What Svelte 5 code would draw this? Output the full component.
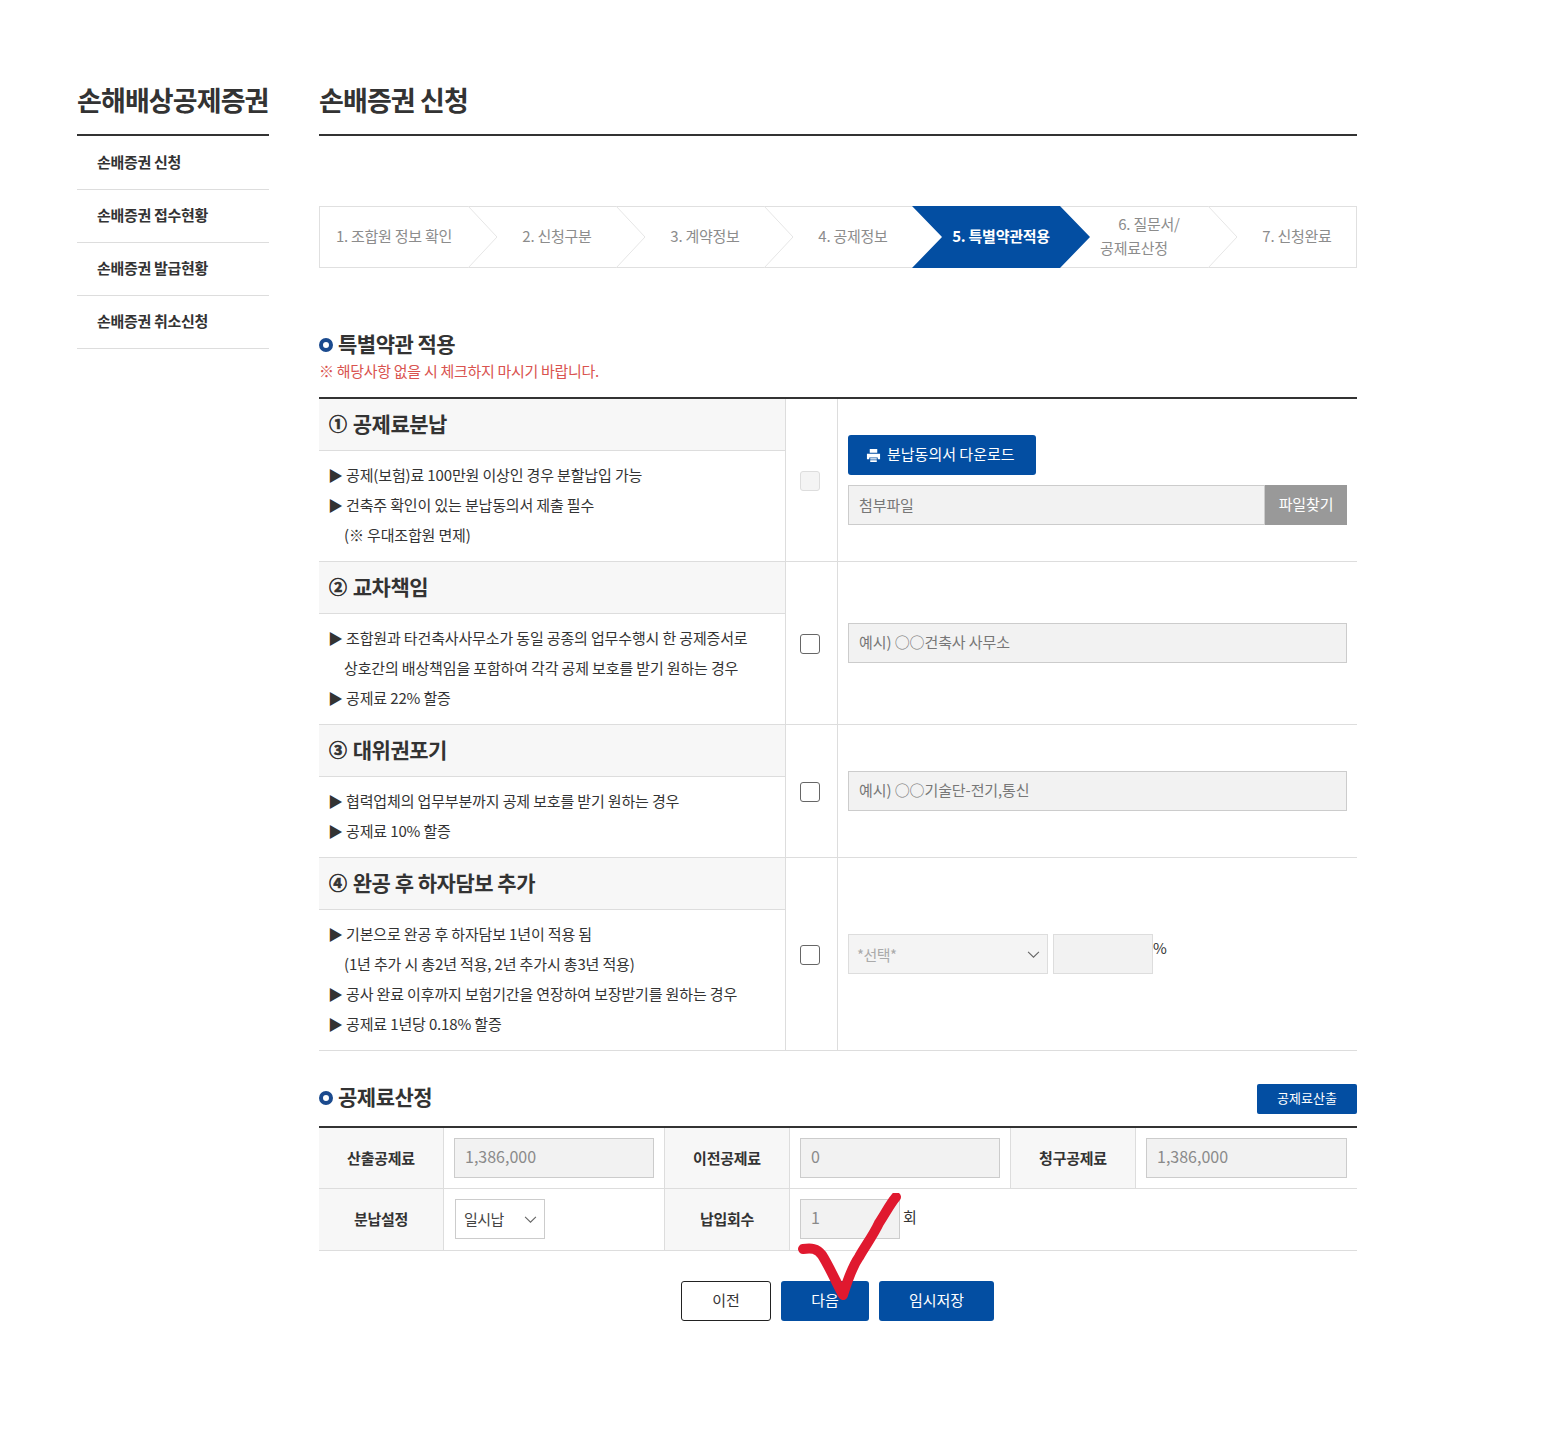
<script>
  const menu = ['손배증권 신청', '손배증권 접수현황', '손배증권 발급현황', '손배증권 취소신청']
  const steps = [
    { label: '1. 조합원 정보 확인' },
    { label: '2. 신청구분' },
    { label: '3. 계약정보' },
    { label: '4. 공제정보' },
    { label: '5. 특별약관적용', active: true },
    { label: '6. 질문서/', sub: '공제료산정' },
    { label: '7. 신청완료' }
  ]
</script>

{#snippet arrow()}
  <svg class="arrow" viewBox="0 0 12 8" aria-hidden="true"><path d="M1 1.5 6 6.5 11 1.5" fill="none" stroke="#666" stroke-width="1"/></svg>
{/snippet}

<main>
  <aside>
    <h2>손해배상공제증권</h2>
    <ul>
      {#each menu as item}
        <li>{item}</li>
      {/each}
    </ul>
  </aside>

  <section class="content">
    <h1>손배증권 신청</h1>

    <div class="steps">
      {#each steps as step, i}
        <div class="step" class:first={i === 0} class:active={step.active}>
          {#if step.active}
            <svg class="shape" viewBox="0 0 178 62" preserveAspectRatio="none" aria-hidden="true"><path d="M0 0H148L178 31 148 62H0L30 31Z" fill="#034ea2"/></svg>
          {:else if i < 6 && !steps[i + 1].active}
            <svg class="chev" viewBox="0 0 30 62" aria-hidden="true"><path d="M0 0 29 31 0 62" fill="none" stroke="#e6e6e6"/></svg>
          {/if}
          <div class="label">
            {step.label}
            {#if step.sub}<span class="sub">{step.sub}</span>{/if}
          </div>
        </div>
      {/each}
    </div>

    <h3 class="sec first-sec"><i></i>특별약관 적용</h3>
    <p class="note">※ 해당사항 없을 시 체크하지 마시기 바랍니다.</p>

    <div class="terms">
      <div class="term">
        <div class="desc">
          <h4><span>①</span> 공제료분납</h4>
          <div class="lines">
            <p>▶ 공제(보험)료 100만원 이상인 경우 분할납입 가능</p>
            <p>▶ 건축주 확인이 있는 분납동의서 제출 필수</p>
            <p class="indent">(※ 우대조합원 면제)</p>
          </div>
        </div>
        <div class="check"><input type="checkbox" disabled /></div>
        <div class="field">
          <button class="download">
            <svg viewBox="0 0 16 16" aria-hidden="true"><path fill="#fff" d="M4 1h8v4H4zM1 6h14v6h-2.500v-2h-9v2H1zM4.500 11h7v1.200h-7zM4.500 13h7v1.800h-7z"/></svg>
            분납동의서 다운로드
          </button>
          <div class="file">
            <input type="text" placeholder="첨부파일" disabled />
            <span>파일찾기</span>
          </div>
        </div>
      </div>

      <div class="term">
        <div class="desc">
          <h4><span>②</span> 교차책임</h4>
          <div class="lines">
            <p>▶ 조합원과 타건축사사무소가 동일 공종의 업무수행시 한 공제증서로</p>
            <p class="indent">상호간의 배상책임을 포함하여 각각 공제 보호를 받기 원하는 경우</p>
            <p>▶ 공제료 22% 할증</p>
          </div>
        </div>
        <div class="check"><input type="checkbox" /></div>
        <div class="field"><input type="text" placeholder="예시) ○○건축사 사무소" disabled /></div>
      </div>

      <div class="term">
        <div class="desc">
          <h4><span>③</span> 대위권포기</h4>
          <div class="lines">
            <p>▶ 협력업체의 업무부분까지 공제 보호를 받기 원하는 경우</p>
            <p>▶ 공제료 10% 할증</p>
          </div>
        </div>
        <div class="check"><input type="checkbox" /></div>
        <div class="field"><input type="text" placeholder="예시) ○○기술단-전기,통신" disabled /></div>
      </div>

      <div class="term">
        <div class="desc">
          <h4><span>④</span> 완공 후 하자담보 추가</h4>
          <div class="lines">
            <p>▶ 기본으로 완공 후 하자담보 1년이 적용 됨</p>
            <p class="indent">(1년 추가 시 총2년 적용, 2년 추가시 총3년 적용)</p>
            <p>▶ 공사 완료 이후까지 보험기간을 연장하여 보장받기를 원하는 경우</p>
            <p>▶ 공제료 1년당 0.18% 할증</p>
          </div>
        </div>
        <div class="check"><input type="checkbox" /></div>
        <div class="field inline">
          <div class="select sel-off">
            <select disabled><option>*선택*</option></select>
            {@render arrow()}
          </div>
          <input class="pct" type="text" disabled />
          <span class="unit pct-unit">%</span>
        </div>
      </div>
    </div>

    <div class="calc-head">
      <h3 class="sec"><i></i>공제료산정</h3>
      <button class="calc-btn">공제료산출</button>
    </div>

    <div class="calc">
      <div class="th">산출공제료</div>
      <div class="td"><input type="text" value="1,386,000" disabled /></div>
      <div class="th mid">이전공제료</div>
      <div class="td"><input type="text" value="0" disabled /></div>
      <div class="th mid">청구공제료</div>
      <div class="td"><input type="text" value="1,386,000" disabled /></div>

      <div class="th">분납설정</div>
      <div class="td">
        <div class="select sel-on">
          <select><option>일시납</option></select>
          {@render arrow()}
        </div>
      </div>
      <div class="th mid">납입회수</div>
      <div class="td times">
        <input type="text" value="1" disabled />
        <span class="unit">회</span>
      </div>
      <div class="td rest"></div>
    </div>

    <div class="actions">
      <button class="prev">이전</button>
      <button class="next">다음</button>
      <button class="save">임시저장</button>
    </div>
  </section>

  <svg class="mark" viewBox="0 0 120 120" aria-hidden="true">
    <path d="M6 56C14 55 20 55 25 62 32 73 39 89 46 102 50 89 55 74 62 64 68 53 76 43 82 30 88 21 93 11 99 4" fill="none" stroke="#e0192f" stroke-width="10" stroke-linecap="round" stroke-linejoin="round"/>
  </svg>
</main>

<style>
  :global(body) {
    background: #fff;
  }

  main {
    position: relative;
    box-sizing: border-box;
    display: flex;
    gap: 50px;
    width: 1357px;
    height: 1448px;
    padding: 78px 0 0 77px;
    overflow: hidden;
    font-family: 'Noto Sans CJK KR', 'Noto Sans', sans-serif;
    color: #333;
    letter-spacing: -0.15px;
  }

  aside {
    width: 192px;
    flex: none;
  }

  aside h2,
  h1 {
    margin: 0;
    height: 56px;
    line-height: 44px;
    font-size: 27px;
    font-weight: 700;
    color: #333;
    border-bottom: 2px solid #333;
    letter-spacing: -0.9px;
    white-space: nowrap;
  }

  ul {
    margin: 0;
    padding: 1px 0 0;
    list-style: none;
  }

  li {
    height: 52px;
    padding-left: 20px;
    line-height: 50px;
    font-size: 15px;
    font-weight: 700;
    letter-spacing: -0.3px;
    border-bottom: 1px solid #ddd;
  }

  .content {
    width: 1038px;
    flex: none;
  }

  .steps {
    box-sizing: border-box;
    display: grid;
    grid-template-columns: repeat(7, 1fr);
    height: 62px;
    margin-top: 70px;
    border: 1px solid #e0e0e0;
  }

  .step {
    position: relative;
    display: flex;
    align-items: center;
    justify-content: center;
    padding: 0 0 2px 30px;
    font-size: 15px;
    color: #8c8c8c;
    line-height: 24px;
    text-align: center;
    letter-spacing: -0.25px;
  }

  .step.first {
    padding-left: 0;
  }

  .step .label {
    position: relative;
    white-space: nowrap;
  }

  .sub {
    display: block;
    margin-right: 30px;
  }

  .chev {
    position: absolute;
    top: -1px;
    right: -30px;
    width: 30px;
    height: 62px;
    z-index: 1;
  }

  .shape {
    position: absolute;
    top: -1px;
    left: 0;
    width: 178px;
    height: 62px;
    z-index: 2;
  }

  .step.active .label {
    z-index: 3;
    color: #fff;
    font-weight: 700;
  }

  .sec {
    display: flex;
    align-items: center;
    gap: 5px;
    margin: 0;
    font-size: 21px;
    font-weight: 700;
    color: #333;
    line-height: 30px;
    letter-spacing: -0.5px;
  }

  .sec i {
    width: 14px;
    height: 14px;
    box-sizing: border-box;
    border: 4px solid #1b4a8e;
    border-radius: 50%;
    margin-top: 4px;
  }

  .first-sec {
    margin-top: 60px;
  }

  .note {
    margin: 1px 0 0;
    height: 24px;
    font-size: 15px;
    line-height: 24px;
    letter-spacing: -0.3px;
    color: #d9534f;
  }

  .terms {
    margin-top: 14px;
    border-top: 2px solid #333;
  }

  .term {
    display: flex;
    border-bottom: 1px solid #ddd;
  }

  .desc {
    width: 466px;
    flex: none;
  }

  h4 {
    margin: 0;
    height: 51px;
    padding-left: 10px;
    line-height: 48px;
    font-size: 21px;
    font-weight: 700;
    letter-spacing: -0.5px;
    background: #f7f7f7;
    border-bottom: 1px solid #ddd;
  }

  h4 span {
    margin-right: 2px;
    font-size: 18px;
    -webkit-text-stroke: 0.6px #333;
    vertical-align: 1px;
  }

  .lines {
    padding: 9px 0 11px 9px;
  }

  .lines p {
    margin: 0;
    font-size: 15px;
    line-height: 30px;
    white-space: nowrap;
  }

  .lines .indent {
    padding-left: 16px;
  }

  .check {
    width: 53px;
    flex: none;
    box-sizing: border-box;
    display: flex;
    align-items: center;
    justify-content: center;
    border-left: 1px solid #ddd;
    border-right: 1px solid #ddd;
  }

  input[type='checkbox'] {
    appearance: none;
    width: 20px;
    height: 20px;
    margin: 2px 4px 0 0;
    background: #fff;
    border: 1px solid #666;
    border-radius: 3px;
  }

  input[type='checkbox']:disabled {
    background: #f4f4f4;
    border-color: #ddd;
  }

  .field {
    flex: 1;
    display: flex;
    flex-direction: column;
    justify-content: center;
    gap: 10px;
    padding: 0 10px;
  }

  .field.inline {
    flex-direction: row;
    align-items: center;
    justify-content: flex-start;
    gap: 5px;
  }

  input[type='text'] {
    box-sizing: border-box;
    width: 100%;
    height: 40px;
    padding: 0 10px 4px;
    font: inherit;
    font-size: 15px;
    letter-spacing: -0.1px;
    color: #8a8a8a;
    background: #f2f2f2;
    border: 1px solid #ccc;
    border-radius: 0;
    opacity: 1;
  }

  input[type='text']::placeholder {
    color: #777;
    opacity: 1;
  }

  .download {
    display: flex;
    align-items: center;
    gap: 6px;
    width: 188px;
    height: 40px;
    padding: 0 0 3px 18px;
    font: inherit;
    font-size: 15px;
    color: #fff;
    background: #034ea2;
    border: 0;
    border-radius: 3px;
  }

  .download svg {
    width: 15px;
    height: 15px;
    margin-top: 3px;
  }

  .file {
    display: flex;
  }

  .file input[type='text'] {
    padding-bottom: 2px;
  }

  .file span {
    flex: none;
    width: 82px;
    height: 40px;
    line-height: 38px;
    text-align: center;
    font-size: 15px;
    color: #fff;
    background: #999;
  }

  .select {
    position: relative;
    flex: none;
    height: 40px;
    box-sizing: border-box;
  }

  .select select {
    appearance: none;
    width: 100%;
    height: 40px;
    padding: 0 8px;
    font: inherit;
    font-size: 15px;
    letter-spacing: -0.5px;
    background: #fff;
    border: 1px solid #ccc;
    border-radius: 0;
    color: #444;
  }

  .sel-off {
    width: 200px;
  }

  .sel-off select {
    background: #f4f4f4;
    border-color: #ddd;
    color: #aaa;
    opacity: 1;
  }

  .sel-on {
    width: 90px;
    margin: 0 0 2px 1px;
  }

  .arrow {
    position: absolute;
    top: 16px;
    right: 8px;
    width: 13px;
    height: 9px;
    pointer-events: none;
  }

  input.pct[type='text'] {
    width: 100px;
    border-color: #ddd;
  }

  .unit {
    font-size: 15px;
    line-height: 20px;
  }

  .pct-unit {
    margin: -12px 0 0 -5px;
  }

  .calc-head {
    display: flex;
    align-items: flex-start;
    justify-content: space-between;
    height: 30px;
    margin-top: 33px;
  }

  .calc-head .sec {
    margin-top: -3px;
  }

  .calc-btn {
    width: 100px;
    height: 30px;
    padding: 0 0 3px;
    font: inherit;
    font-size: 13px;
    color: #fff;
    background: #034ea2;
    border: 0;
    border-radius: 2px;
  }

  .calc {
    display: grid;
    grid-template-columns: 125px 220px 126px 220px 126px 221px;
    grid-template-rows: 61px 62px;
    margin-top: 12px;
    border-top: 2px solid #333;
  }

  .th {
    display: flex;
    align-items: center;
    justify-content: center;
    padding-bottom: 2px;
    box-sizing: border-box;
    font-size: 15px;
    font-weight: 700;
    letter-spacing: -0.25px;
    background: #f7f7f7;
    border-bottom: 1px solid #ddd;
    border-right: 1px solid #ddd;
  }

  .th.mid {
    border-left: 1px solid #ddd;
  }

  .td {
    display: flex;
    align-items: center;
    padding: 0 10px;
    box-sizing: border-box;
    border-bottom: 1px solid #ddd;
  }

  .td input[type='text'] {
    font-size: 16px;
    letter-spacing: 0;
  }

  .times {
    gap: 3px;
  }

  .times input[type='text'] {
    width: 100px;
    flex: none;
    margin-bottom: 2px;
  }

  .times .unit {
    margin-top: -6px;
  }

  .rest {
    grid-column: span 2;
  }

  .actions {
    display: flex;
    justify-content: center;
    gap: 10px;
    margin-top: 30px;
    padding-right: 1px;
  }

  .actions button {
    height: 40px;
    padding: 0 0 3px;
    font: inherit;
    font-size: 15px;
    border-radius: 3px;
  }

  .prev {
    width: 90px;
    color: #333;
    background: #fff;
    border: 1px solid #222;
  }

  .next,
  .save {
    color: #fff;
    background: #034ea2;
    border: 0;
  }

  .next {
    width: 88px;
  }

  .save {
    width: 115px;
  }

  .mark {
    position: absolute;
    left: 797px;
    top: 1193px;
    width: 120px;
    height: 120px;
    pointer-events: none;
  }
</style>
